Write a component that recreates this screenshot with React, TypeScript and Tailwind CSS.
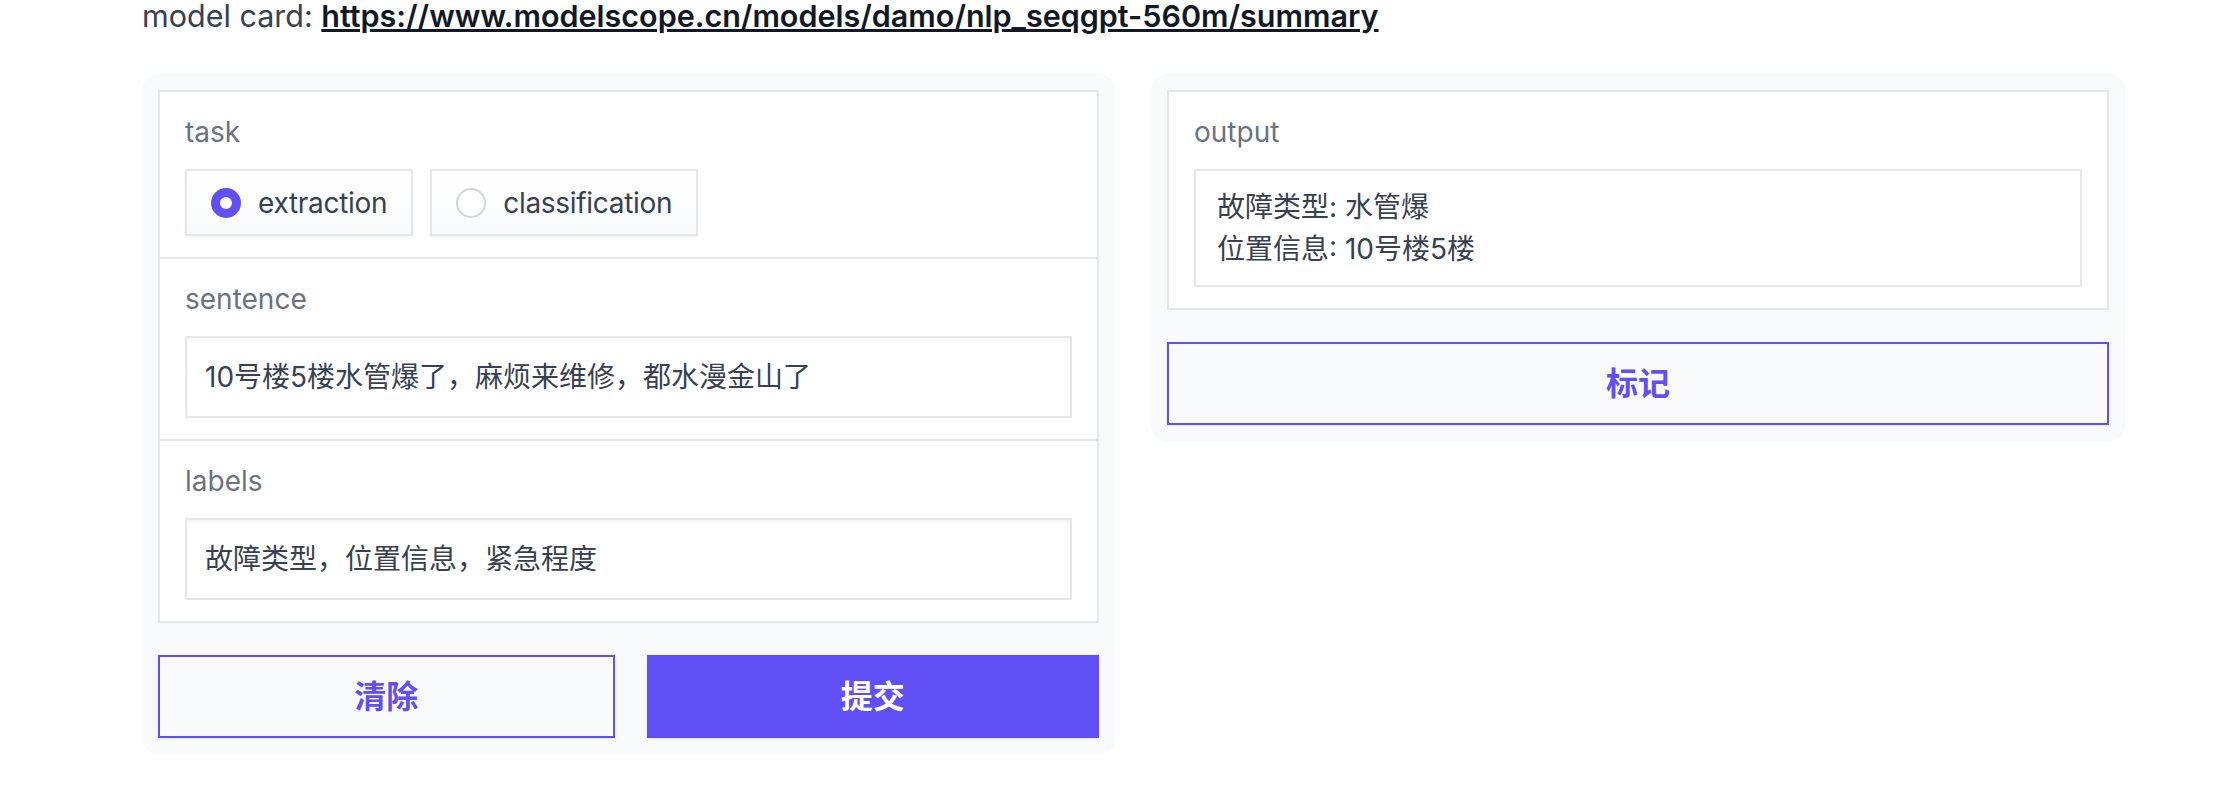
import { useState } from "react";

const font = { fontFamily: 'Inter, "Noto Sans CJK SC", sans-serif' };

function Label({ text }: { text: string }) {
  return <div className="mb-[17px] text-[28px] leading-[39px] text-[#6b7280]">{text}</div>;
}

function Radio({ label, checked, onClick }: { label: string; checked: boolean; onClick: () => void }) {
  return (
    <button
      onClick={onClick}
      className="flex h-[67px] items-center gap-[17px] border-2 border-[#e5e7eb] bg-linear-to-t from-[#f9fafb] to-white px-[24px] shadow-[0_1px_2px_rgba(0,0,0,0.05)]"
    >
      {checked ? (
        <span className="flex h-[30px] w-[30px] items-center justify-center rounded-full bg-[#604ff5]">
          <span className="h-[12px] w-[12px] rounded-full bg-white" />
        </span>
      ) : (
        <span className="h-[30px] w-[30px] rounded-full border-2 border-[#d1d5db] bg-white" />
      )}
      <span className="text-[28px] leading-[38px] tracking-[-0.3px] text-[#374151]">{label}</span>
    </button>
  );
}

function TextBox({ value }: { value: string }) {
  return (
    <div className="flex h-[82px] items-center border-2 border-[#e5e7eb] bg-white px-[18px] text-[28px] text-[#374151] shadow-[inset_0_2px_4px_rgba(0,0,0,0.05)]">
      {value}
    </div>
  );
}

export default function App() {
  const [task, setTask] = useState("extraction");

  return (
    <div className="h-[796px] w-full overflow-hidden bg-white pl-[142px]" style={font}>
      <div className="h-[74px] pt-[1px]">
        <div className="text-[30.5px] leading-[30px] text-[#374151]">
          model card:{" "}
          <a className="font-semibold text-[#111827] underline" href="#">
            https://www.modelscope.cn/models/damo/nlp_seqgpt-560m/summary
          </a>
        </div>
      </div>

      <div className="flex items-start gap-[36px]">
        {/* left column */}
        <div className="flex w-[973px] flex-col gap-[32px] rounded-[16px] bg-[#f9fafb] p-4">
          <div className="border-2 border-[#e5e7eb] bg-white">
            <div className="px-[25px] py-[21px]">
              <Label text="task" />
              <div className="flex gap-[17px]">
                <Radio label="extraction" checked={task === "extraction"} onClick={() => setTask("extraction")} />
                <Radio label="classification" checked={task === "classification"} onClick={() => setTask("classification")} />
              </div>
            </div>
            <div className="border-t-2 border-[#e5e7eb] px-[25px] py-[21px]">
              <Label text="sentence" />
              <TextBox value="10号楼5楼水管爆了，麻烦来维修，都水漫金山了" />
            </div>
            <div className="border-t-2 border-[#e5e7eb] px-[25px] py-[21px]">
              <Label text="labels" />
              <TextBox value="故障类型，位置信息，紧急程度" />
            </div>
          </div>
          <div className="flex gap-8">
            <button className="h-[83px] flex-1 border-2 border-[#604ff5] bg-[#f9fafb] text-[32px] font-bold text-[#604ff5] shadow-[0_1px_3px_rgba(0,0,0,0.08)]">
              清除
            </button>
            <button className="h-[83px] flex-1 bg-[#604ff5] text-[32px] font-bold text-white shadow-[0_1px_3px_rgba(0,0,0,0.08)]">
              提交
            </button>
          </div>
        </div>

        {/* right column */}
        <div className="flex w-[974px] flex-col gap-[32px] rounded-[16px] bg-[#f9fafb] p-4">
          <div className="border-2 border-[#e5e7eb] bg-white px-[25px] py-[21px]">
            <Label text="output" />
            <div className="border-2 border-[#e5e7eb] bg-white px-[21px] py-[15px] text-[28px] leading-[42px] text-[#374151]">
              <div>故障类型: 水管爆</div>
              <div>位置信息: 10号楼5楼</div>
            </div>
          </div>
          <button className="h-[83px] w-full border-2 border-[#604ff5] bg-[#f9fafb] text-[32px] font-bold text-[#604ff5] shadow-[0_1px_3px_rgba(0,0,0,0.08)]">
            标记
          </button>
        </div>
      </div>
    </div>
  );
}
